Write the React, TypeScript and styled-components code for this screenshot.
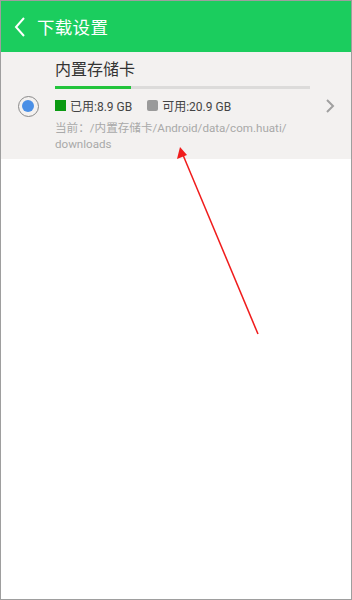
import styled, { createGlobalStyle } from 'styled-components';

const GlobalStyle = createGlobalStyle`
  html, body {
    margin: 0;
    padding: 0;
    background: #fff;
  }
  * {
    box-sizing: border-box;
  }
`;

const Screen = styled.div`
  position: relative;
  width: 352px;
  height: 600px;
  border: 1px solid #9e9e9e;
  background: #fff;
  font-family: Roboto, 'Noto Sans CJK SC', sans-serif;
  overflow: hidden;
`;

const Header = styled.div`
  height: 51px;
  background: #1bcd5e;
  display: flex;
  align-items: center;
  padding-left: 12px;
  gap: 10px;
  color: #fff;
`;

const Title = styled.div`
  font-size: 17.5px;
  letter-spacing: 0.3px;
`;

const StorageRow = styled.div`
  display: flex;
  align-items: center;
  background: #f3f1f0;
  padding: 8px 16px 7px 0;
`;

const RadioCell = styled.div`
  width: 54px;
  display: flex;
  justify-content: center;
`;

const Radio = styled.div`
  width: 21px;
  height: 21px;
  border-radius: 50%;
  border: 1.5px solid #8a8a8a;
  display: flex;
  align-items: center;
  justify-content: center;

  &::after {
    content: '';
    width: 12px;
    height: 12px;
    border-radius: 50%;
    background: #4a8fe6;
  }
`;

const Info = styled.div`
  flex: 1;
  display: flex;
  flex-direction: column;
  padding-right: 15px;
`;

const Name = styled.div`
  font-size: 16px;
  line-height: 20px;
  color: #333;
`;

const Bar = styled.div`
  margin-top: 6px;
  height: 3px;
  background: #dcdbda;
`;

const BarFill = styled.div`
  height: 100%;
  background: #22c43c;
`;

const Legend = styled.div`
  margin-top: 9px;
  height: 14px;
  display: flex;
  align-items: center;
  gap: 15px;
`;

const LegendItem = styled.div`
  display: flex;
  align-items: center;
  gap: 4px;
  font-size: 12px;
  color: #444;
`;

const Swatch = styled.span<{ color: string; round?: boolean }>`
  width: 11px;
  height: 11px;
  background: ${p => p.color};
  border-radius: ${p => (p.round ? '2px' : '0')};
`;

const Path = styled.div`
  margin-top: 8px;
  font-size: 11.6px;
  line-height: 16px;
  color: #a9a9a9;
`;

const Arrow = styled.svg`
  position: absolute;
  left: 0;
  top: 0;
  pointer-events: none;
`;

const App = () => {
  const used = 8.9;
  const free = 20.9;
  const pct = (used / (used + free)) * 100;

  return (
    <>
      <GlobalStyle />
      <Screen>
        <Header>
          <svg width="14" height="22" viewBox="0 0 14 22">
            <path d="M11 2 L3 11 L11 20" fill="none" stroke="#fff" strokeWidth="2" />
          </svg>
          <Title>下载设置</Title>
        </Header>
        <StorageRow>
          <RadioCell>
            <Radio />
          </RadioCell>
          <Info>
            <Name>内置存储卡</Name>
            <Bar>
              <BarFill style={{ width: `${pct}%` }} />
            </Bar>
            <Legend>
              <LegendItem>
                <Swatch color="#0b9a12" />
                已用:8.9 GB
              </LegendItem>
              <LegendItem>
                <Swatch color="#9a9a9a" round />
                可用:20.9 GB
              </LegendItem>
            </Legend>
            <Path>
              当前：/内置存储卡/Android/data/com.huati/
              <br />
              downloads
            </Path>
          </Info>
          <svg width="10" height="16" viewBox="0 0 10 16">
            <path d="M2 2 L8 8 L2 14" fill="none" stroke="#a0a0a0" strokeWidth="2" />
          </svg>
        </StorageRow>
        <Arrow width="352" height="600">
          <line x1="257" y1="333" x2="182" y2="154" stroke="#f01c1c" strokeWidth="1.5" />
          <polygon points="179,146 176,158 186,154" fill="#f01c1c" />
        </Arrow>
      </Screen>
    </>
  );
};

export default App;
